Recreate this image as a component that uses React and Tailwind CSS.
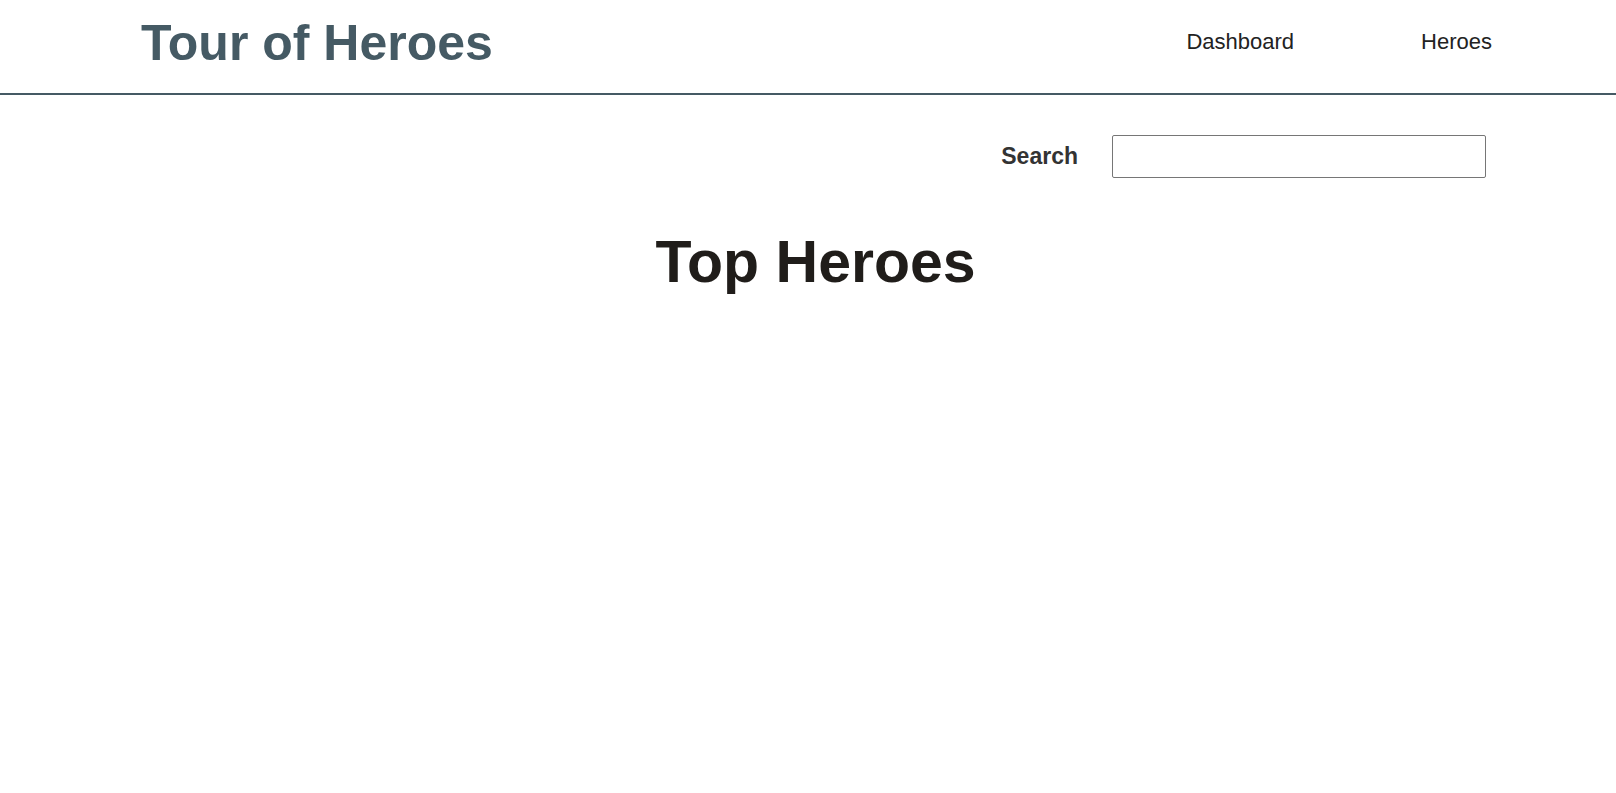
export default function App() {
  return (
    <div className="min-h-screen bg-white font-['Liberation_Sans',Arial,sans-serif]">
      {/* Header */}
      <header className="flex h-[95px] items-start justify-between border-b-2 border-[#455a64] pl-[141px] pr-[124px]">
        <h1 className="mt-[18px] text-[50px] font-bold leading-none text-[#455a64]">Tour of Heroes</h1>
        <nav className="mt-[31px] flex gap-[127px] text-[22px] leading-none text-[#222]">
          <a href="#">Dashboard</a>
          <a href="#">Heroes</a>
        </nav>
      </header>

      {/* Search */}
      <div className="flex items-center justify-end gap-[34px] pr-[130px] pt-[40px]">
        <label className="text-[23px] font-bold text-[#333]">Search</label>
        <input className="h-[43px] w-[374px] rounded-[2px] border border-[#767676] px-2 outline-none" />
      </div>

      {/* Dashboard */}
      <h2 className="mt-[55px] pl-[15px] text-center text-[59px] font-bold leading-none text-[#201d1a]">
        Top Heroes
      </h2>
    </div>
  );
}
